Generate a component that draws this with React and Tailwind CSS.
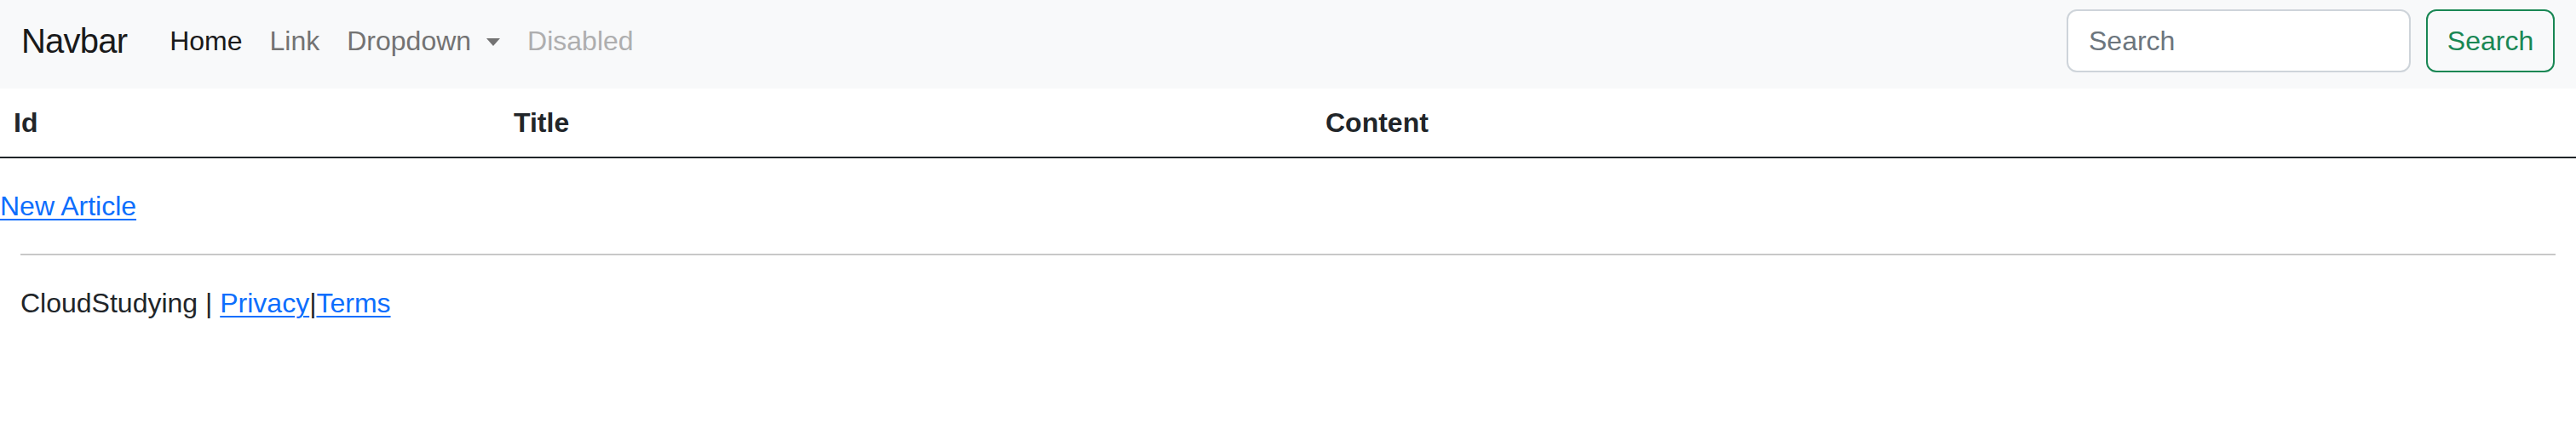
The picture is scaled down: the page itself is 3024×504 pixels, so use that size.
export default function App() {
  const font = { fontFamily: '"Liberation Sans", Arial, sans-serif' };
  return (
    <div style={font} className="min-h-[504px] bg-white text-[#212529] text-[32px] leading-[48px]">
      <nav className="bg-[#f8f9fa] h-[104px] pt-[11px] pl-[24px] pr-[25px]">
        <div className="flex h-[74px] items-center">
          <a className="text-[40px] leading-[60px] tracking-[-0.8px] text-[#1a1a1a] mr-[34px] pl-[1px]">Navbar</a>
          <ul className="flex items-center">
            <li><a className="block px-[16px] py-[16px] text-[#1a1a1a]">Home</a></li>
            <li><a className="block px-[16px] py-[16px] text-[#737373]">Link</a></li>
            <li>
              <a className="flex items-center px-[16px] py-[16px] text-[#737373]">
                Dropdown
                <span className="ml-[18px] mt-[2px] w-0 h-0 border-l-[8px] border-r-[8px] border-t-[9px] border-l-transparent border-r-transparent border-t-[#737373]"></span>
              </a>
            </li>
            <li><a className="block px-[16px] py-[16px] text-[#aeaeaf]">Disabled</a></li>
          </ul>
          <form className="ml-auto flex items-center">
            <input
              type="search"
              placeholder="Search"
              style={font}
              className="w-[404px] h-[74px] bg-white border-2 border-[#ced4da] rounded-[12px] px-[24px] text-[32px] text-[#212529] placeholder:text-[#6c757d] outline-none"
            />
            <button
              type="button"
              style={font}
              className="ml-[18px] w-[151px] h-[74px] border-2 border-[#198754] rounded-[12px] text-[#198754] text-[32px] bg-transparent"
            >
              Search
            </button>
          </form>
        </div>
      </nav>

      <table className="w-full border-collapse mb-[32px]">
        <thead>
          <tr className="border-b-2 border-[#212529]">
            <th className="w-[587px] text-left font-bold px-[16px] py-[16px] h-[80px]">Id</th>
            <th className="w-[953px] text-left font-bold px-[16px] py-[16px] h-[80px]">Title</th>
            <th className="text-left font-bold px-[16px] py-[16px] h-[80px]">Content</th>
          </tr>
        </thead>
        <tbody></tbody>
      </table>

      <p>
        <a className="text-[#0d6efd] underline underline-offset-[4px] decoration-2">New Article</a>
      </p>

      <div className="px-[24px]">
        <hr className="my-[32px] border-0 border-t-2 border-[#c8c8c8]" />
        <footer>
          CloudStudying |{" "}
          <a className="text-[#0d6efd] underline underline-offset-[4px] decoration-2">Privacy</a>|<a className="text-[#0d6efd] underline underline-offset-[4px] decoration-2">Terms</a>
        </footer>
      </div>
    </div>
  );
}
